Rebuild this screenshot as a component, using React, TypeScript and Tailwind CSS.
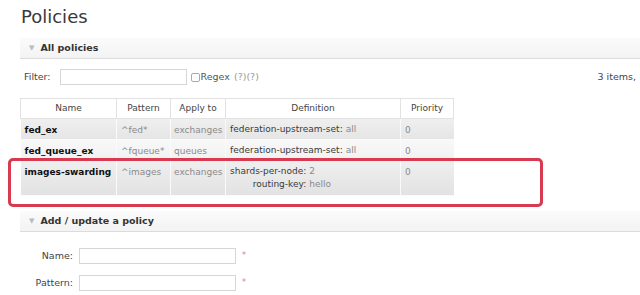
import React from 'react';

const rows = [
  { name: 'fed_ex', pattern: '^fed*', apply: 'exchanges', def: [['federation-upstream-set', 'all']], prio: '0', tone: 'odd' },
  { name: 'fed_queue_ex', pattern: '^fqueue*', apply: 'queues', def: [['federation-upstream-set', 'all']], prio: '0', tone: 'even' },
  {
    name: 'images-swarding',
    pattern: '^images',
    apply: 'exchanges',
    def: [
      ['shards-per-node', '2'],
      ['routing-key', 'hello'],
    ],
    prio: '0',
    tone: 'odd',
  },
];

const SectionHeader: React.FC<{ title: string }> = ({ title }) => (
  <div className="ml-5 h-[21px] flex items-center bg-gradient-to-b from-[#fbfbfb] to-[#f3f3f3] border-b border-[#dcdcdc]">
    <span className="ml-[9px] mr-[6px] text-[7px] text-[#bbb] leading-none">▼</span>
    <span className="text-[9.5px] font-bold text-[#333]">{title}</span>
  </div>
);

const App: React.FC = () => (
  <div className="relative w-[640px] h-[295px] overflow-hidden bg-white text-[#444]" style={{ fontFamily: '"DejaVu Sans", Verdana, sans-serif' }}>
    <h1 className="ml-[21px] pt-[4px] h-[38px] text-[18px] leading-[26px] text-[#3a3a3a]">Policies</h1>

    <SectionHeader title="All policies" />

    <div className="ml-[24px] mt-[10px] h-[16px] flex items-center text-[9.5px]">
      <span className="text-[#444]">Filter:</span>
      <input className="ml-[9px] w-[127px] h-[16px] border border-[#d6d6d6] bg-white" />
      <span className="ml-[4px] w-[9px] h-[9px] border border-[#aaa] rounded-[2px] bg-white" />
      <span className="ml-[1px] text-[#555]">Regex</span>
      <span className="ml-[4px] text-[#999]">(?)(?)</span>
      <span className="ml-auto mr-[4px] text-[#444]">3 items,</span>
    </div>

    <table className="ml-5 mt-[13px] w-[433px] table-fixed border-collapse text-[9px]">
      <colgroup>
        <col className="w-[96px]" />
        <col className="w-[54px]" />
        <col className="w-[55px]" />
        <col className="w-[175px]" />
        <col className="w-[53px]" />
      </colgroup>
      <thead>
        <tr className="h-[20px] text-[#444]">
          <th className="p-0 font-normal border border-[#e2e2e2] bg-white">Name</th>
          <th className="p-0 font-normal border border-[#e2e2e2] bg-white">Pattern</th>
          <th className="p-0 font-normal border border-[#e2e2e2] bg-white">Apply to</th>
          <th className="p-0 font-normal border border-[#e2e2e2] bg-white">Definition</th>
          <th className="p-0 font-normal border border-[#e2e2e2] bg-white">Priority</th>
        </tr>
      </thead>
      <tbody>
        {rows.map((r) => (
          <tr
            key={r.name}
            className={
              r.def.length > 1
                ? 'h-[35px] bg-gradient-to-b from-[#efefef] to-[#e2e2e2] align-top'
                : r.tone === 'odd'
                  ? 'h-[21px] bg-gradient-to-b from-[#efefef] to-[#e5e5e5] align-top'
                  : 'h-[21px] bg-gradient-to-b from-[#f8f8f8] to-[#f1f1f1] align-top'
            }
          >
            <td className="px-[4px] pt-[5px] leading-[12px] font-bold text-[#111] border-r border-b border-[#fafafa] whitespace-nowrap">{r.name}</td>
            <td className="px-[4px] pt-[5px] leading-[12px] text-[#8a8a8a] border-r border-b border-[#fafafa] whitespace-nowrap">{r.pattern}</td>
            <td className="px-[3px] pt-[5px] leading-[12px] text-[#8a8a8a] border-r border-b border-[#fafafa] whitespace-nowrap">{r.apply}</td>
            <td className="px-[4px] pt-[4px] border-r border-b border-[#fafafa] whitespace-nowrap">
              <table className="border-collapse">
                <tbody>
                  {r.def.map(([k, v]) => (
                    <tr key={k} className="leading-[13px]">
                      <td className="text-right text-[#3a3a3a] p-0">{k}:</td>
                      <td className="pl-[3px] text-[#8a8a8a] p-0">{v}</td>
                    </tr>
                  ))}
                </tbody>
              </table>
            </td>
            <td className="px-[4px] pt-[5px] leading-[12px] text-[#8a8a8a] border-b border-[#fafafa]">{r.prio}</td>
          </tr>
        ))}
      </tbody>
    </table>

    <div className="mt-[15px]">
      <SectionHeader title="Add / update a policy" />
    </div>

    <div className="mt-[16px] flex flex-col gap-[11px] text-[9.5px]">
      {['Name:', 'Pattern:'].map((label) => (
        <div key={label} className="flex items-center h-[16px]">
          <span className="w-[73px] text-right text-[#444]">{label}</span>
          <input className="ml-[6px] w-[157px] h-[16px] border border-[#d6d6d6] bg-white" />
          <span className="ml-[6px] text-[#e08080] text-[8px]">*</span>
        </div>
      ))}
    </div>

    <div className="absolute left-[8px] top-[158px] w-[535px] h-[49px] border-[3px] border-[#d83a4f] rounded-[5px] pointer-events-none" />
  </div>
);

export default App;
